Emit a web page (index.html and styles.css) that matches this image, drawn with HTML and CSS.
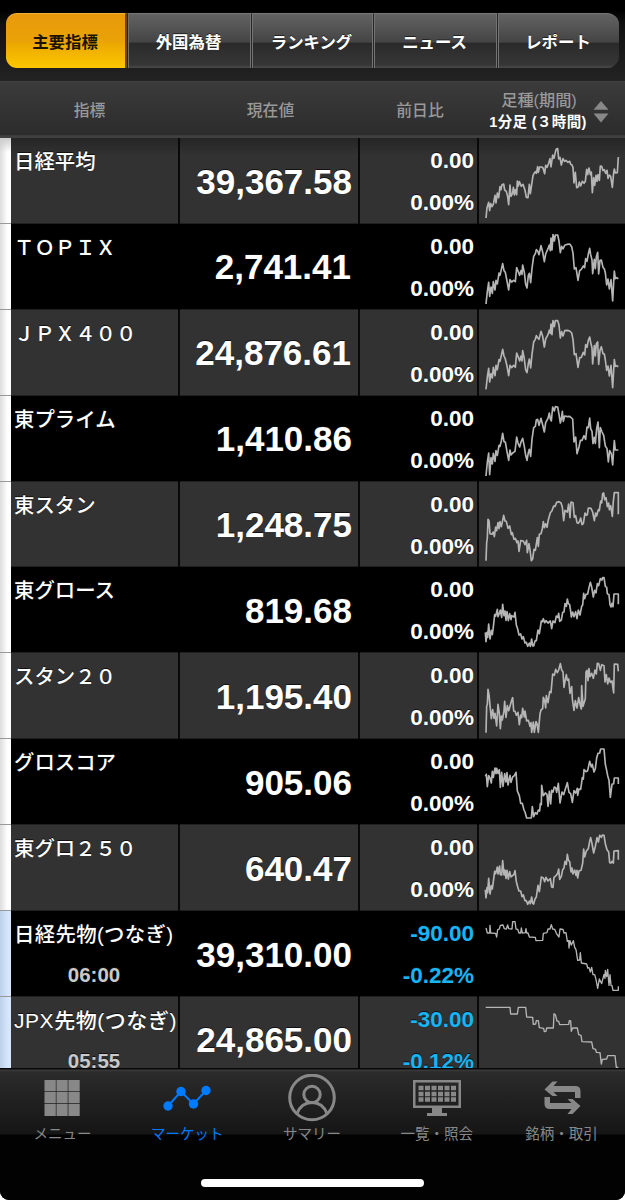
FILE: index.html
```html
<!DOCTYPE html>
<html lang="ja">
<head>
<meta charset="utf-8">
<title>主要指標</title>
<link rel="stylesheet" href="styles.css">
</head>
<body>
<div class="app">
  <nav class="tabs">
    <a class="tab active">主要指標</a>
    <a class="tab">外国為替</a>
    <a class="tab">ランキング</a>
    <a class="tab">ニュース</a>
    <a class="tab">レポート</a>
  </nav>
  <header class="head">
    <div class="h-name">指標</div>
    <div class="h-price">現在値</div>
    <div class="h-change">前日比</div>
    <div class="h-chart">
      <div class="period"><span class="kind">足種(期間)</span><b class="span">1分足 (３時間)</b></div>
      <svg class="sort" viewBox="0 0 16 22"><path d="M8 0 15.5 8.8H.5ZM8 21.5 .5 12.5h15Z"/></svg>
    </div>
  </header>
  <main class="rows">
    <section class="row">
      <i class="mark"></i><div class="name">日経平均</div><div class="price">39,367.58</div>
      <div class="change"><span>0.00</span><span>0.00%</span></div>
      <svg class="spark" viewBox="12 9 438 258"><polyline points="33,249 36,218 41,202 44,227 47,206 51,215 55,208 60,181 63,204 67,174 71,188 75,155 78,164 81,149 86,147 89,165 94,169 98,185 101,209 105,150 108,184 113,174 115,157 118,180 121,164 125,179 127,138 130,153 133,140 139,154 144,148 150,166 154,187 159,188 163,148 166,176 170,149 174,122 178,114 181,110 184,115 188,95 190,112 194,96 200,96 204,99 209,116 212,91 216,97 221,85 225,71 228,96 233,60 237,70 241,52 244,42 248,41 251,72 255,67 259,90 264,71 269,79 273,76 278,82 284,79 287,88 291,90 294,98 297,144 301,112 305,158 310,155 313,141 317,153 322,139 327,145 331,139 335,103 338,119 342,99 346,119 349,111 352,173 356,128 359,151 363,121 366,139 369,119 373,136 376,93 380,94 384,107 388,104 392,115 396,106 399,130 403,120 407,124 412,157 416,113 418,102 421,114 427,113 430,66"/></svg>
    </section>
    <section class="row dark">
      <i class="mark"></i><div class="name">ＴＯＰＩＸ</div><div class="price ones">2,741.41</div>
      <div class="change"><span>0.00</span><span>0.00%</span></div>
      <svg class="spark" viewBox="12 267 438 258"><polyline points="33,507 37,470 41,442 44,484 48,456 52,475 55,440 60,465 63,436 67,447 72,414 75,421 83,386 87,407 91,412 96,438 101,465 105,434 110,441 116,436 121,440 125,398 129,408 134,421 138,407 141,418 143,390 148,412 152,448 156,459 160,421 163,415 167,443 171,400 176,364 181,356 184,344 188,348 192,359 198,332 203,351 208,380 212,357 219,341 223,330 226,347 228,309 231,345 234,299 238,318 241,300 248,300 252,318 256,353 260,334 264,342 269,331 277,328 284,327 290,335 294,355 298,402 303,398 309,436 314,407 319,403 325,393 329,398 332,371 336,379 340,357 344,340 347,359 351,375 353,416 358,373 361,401 364,366 368,352 371,417 375,376 379,375 384,397 388,402 391,413 395,450 399,432 403,462 408,434 413,498 416,442 418,408 421,431 425,428 430,431"/></svg>
    </section>
    <section class="row">
      <i class="mark"></i><div class="name">ＪＰＸ４００</div><div class="price ones">24,876.61</div>
      <div class="change"><span>0.00</span><span>0.00%</span></div>
      <svg class="spark" viewBox="12 15 438 258"><polyline points="33,253 37,216 41,190 44,231 48,206 52,219 55,187 60,212 63,181 67,194 72,164 75,169 83,133 87,153 91,162 96,183 101,212 105,181 110,188 116,181 121,187 125,144 129,154 134,168 138,153 141,168 143,137 148,162 152,195 156,203 160,175 163,162 167,189 171,148 176,111 181,103 184,92 188,98 192,103 198,79 203,94 208,126 212,102 219,89 223,75 226,85 228,57 231,89 234,47 238,65 241,47 248,47 252,60 256,99 260,80 264,93 269,77 277,76 284,78 290,84 294,103 298,149 303,146 309,187 314,158 319,157 325,142 329,150 332,119 336,127 340,106 344,96 347,112 351,129 353,177 358,122 361,153 364,116 368,111 371,178 375,136 379,125 384,146 388,147 391,165 395,196 399,183 403,213 408,181 413,248 416,197 418,164 421,184 425,182 430,185"/></svg>
    </section>
    <section class="row dark">
      <i class="mark"></i><div class="name">東プライム</div><div class="price">1,410.86</div>
      <div class="change"><span>0.00</span><span>0.00%</span></div>
      <svg class="spark" viewBox="12 272 438 258"><polyline points="33,512 37,470 41,443 44,508 48,457 52,476 55,444 60,468 63,436 67,450 72,420 75,423 79,407 83,384 87,409 91,410 96,439 101,465 105,434 108,449 113,443 120,438 125,395 129,413 134,425 138,410 143,399 148,424 152,450 156,465 160,442 163,432 167,453 171,402 176,367 181,363 184,344 188,342 192,360 198,339 203,359 208,380 212,352 219,339 223,323 226,341 229,347 233,305 238,317 241,304 248,305 252,327 256,353 259,341 262,318 265,348 269,332 277,334 284,333 293,341 297,410 302,395 306,445 312,425 316,405 321,405 327,391 332,402 336,365 340,367 344,338 347,370 351,378 354,415 358,396 361,414 365,370 369,350 373,427 376,367 381,380 386,390 391,422 396,430 400,470 404,436 409,445 413,479 416,433 418,406 421,434 430,434"/></svg>
    </section>
    <section class="row">
      <i class="mark"></i><div class="name">東スタン</div><div class="price">1,248.75</div>
      <div class="change"><span>0.00</span><span>0.00%</span></div>
      <svg class="spark" viewBox="12 5 438 258"><polyline points="33,241 35,187 37,173 39,117 42,121 45,160 51,162 55,155 58,169 62,140 65,151 69,127 72,145 75,124 79,139 83,120 86,105 90,122 94,123 99,144 104,137 109,163 112,157 117,177 121,174 126,187 129,182 132,213 137,181 145,182 150,193 155,180 157,217 162,190 165,209 169,241 173,236 177,207 181,210 187,172 190,198 193,162 198,160 202,145 205,124 208,142 212,130 216,141 220,118 226,97 231,91 236,77 240,78 245,66 252,64 258,68 262,80 266,121 270,90 277,95 281,71 285,112 288,65 294,67 298,111 302,106 306,127 310,129 314,123 317,113 321,133 325,130 330,98 334,105 337,103 340,83 348,84 353,95 358,121 362,98 365,107 370,88 373,91 377,62 380,68 383,40 386,38 389,58 393,52 397,79 401,68 403,88 407,76 412,108 415,63 418,37 430,37 430,102"/></svg>
    </section>
    <section class="row dark">
      <i class="mark"></i><div class="name">東グロース</div><div class="price">819.68</div>
      <div class="change"><span>0.00</span><span>0.00%</span></div>
      <svg class="spark" viewBox="12 262 438 258"><polyline points="31,458 33,486 36,458 38,473 41,433 45,478 49,452 52,465 55,442 59,405 62,409 67,389 69,411 74,398 76,391 80,413 83,374 87,408 90,394 93,422 96,396 100,423 104,402 108,420 110,408 117,412 120,398 124,436 128,448 132,466 137,463 141,478 145,471 150,490 154,488 158,500 163,490 166,500 170,478 173,499 176,499 180,484 184,483 189,451 193,462 199,424 202,426 205,417 209,429 213,423 219,430 226,424 230,447 234,424 240,429 244,409 248,413 251,401 254,425 259,421 263,398 267,397 270,372 274,380 277,358 280,372 284,375 287,395 289,412 293,397 297,411 302,396 306,417 310,391 315,406 320,380 323,376 326,341 329,357 333,344 338,343 342,324 346,308 350,322 355,352 359,332 363,340 367,312 371,318 376,297 381,301 383,294 387,294 391,320 395,323 397,342 402,345 405,375 408,382 411,371 414,381 417,343 430,343 430,374"/></svg>
    </section>
    <section class="row">
      <i class="mark"></i><div class="name">スタン２０</div><div class="price">1,195.40</div>
      <div class="change"><span>0.00</span><span>0.00%</span></div>
      <svg class="spark" viewBox="12 10 438 258"><polyline points="33,249 35,169 37,165 39,119 42,135 45,167 49,207 53,180 57,206 60,191 65,229 69,164 73,192 76,237 79,199 82,211 87,184 89,155 93,203 97,168 101,183 106,166 110,152 113,144 116,184 120,185 124,197 129,188 133,225 137,196 140,204 143,176 148,202 150,184 155,214 160,212 165,230 168,219 170,248 175,217 178,248 183,216 186,222 190,248 195,193 198,181 203,177 205,143 209,153 212,175 214,138 219,159 224,126 228,129 233,73 238,77 242,59 247,69 251,61 256,42 260,61 264,67 267,113 271,89 274,75 277,92 281,88 285,131 290,111 292,148 297,182 301,153 306,175 311,144 316,168 319,178 320,108 324,170 331,147 333,67 336,62 339,93 342,57 345,81 350,71 355,86 360,61 364,73 367,41 371,42 376,62 380,45 387,48 390,97 394,75 398,103 402,85 406,98 411,94 416,130 418,43 428,44 430,65"/></svg>
    </section>
    <section class="row dark">
      <i class="mark"></i><div class="name">グロスコア</div><div class="price">905.06</div>
      <div class="change"><span>0.00</span><span>0.00%</span></div>
      <svg class="spark" viewBox="12 268 438 258"><polyline points="31,380 34,374 37,411 41,378 45,385 49,400 52,365 55,383 60,355 63,372 65,356 69,371 73,360 76,413 80,368 84,410 89,372 93,397 96,369 99,406 105,377 108,398 113,382 118,378 123,368 127,424 133,438 137,461 142,461 147,481 150,487 155,505 169,505 172,471 176,501 181,489 186,493 190,481 194,484 196,462 199,465 200,407 205,438 211,430 216,434 219,470 223,425 227,463 230,422 234,427 238,412 242,414 245,428 250,401 255,460 261,427 266,435 271,418 277,399 282,428 287,432 292,458 297,423 302,430 307,416 308,437 312,418 317,419 322,384 325,388 327,360 333,366 338,363 344,335 349,352 352,344 357,367 361,357 365,325 369,311 374,310 377,298 387,298 391,344 395,362 398,378 402,392 406,443 411,404 416,402 418,385 430,385 430,403"/></svg>
    </section>
    <section class="row">
      <i class="mark"></i><div class="name">東グロ２５０</div><div class="price">640.47</div>
      <div class="change"><span>0.00</span><span>0.00%</span></div>
      <svg class="spark" viewBox="12 10 438 258"><polyline points="31,204 33,229 36,198 38,213 41,170 45,217 49,192 52,202 55,180 59,149 62,156 67,136 69,157 74,133 76,159 80,160 83,117 87,160 90,145 93,170 96,146 100,172 104,150 108,166 117,158 120,147 124,180 128,195 132,208 137,208 141,225 145,220 150,237 154,237 158,248 163,238 166,246 170,226 173,245 176,247 180,232 184,226 189,191 193,210 199,166 205,169 209,180 213,167 219,178 226,171 230,196 234,197 237,167 244,161 248,155 251,142 254,173 259,164 263,144 267,139 270,119 274,128 277,98 280,115 284,120 288,151 291,139 294,157 299,145 303,161 306,146 308,169 312,148 318,146 323,125 326,82 329,106 334,88 340,81 344,59 347,48 351,66 356,94 361,74 366,48 370,61 374,41 379,47 382,40 387,41 391,66 396,84 401,91 404,123 408,124 411,119 415,124 417,88 430,87 430,114"/></svg>
    </section>
    <section class="row dark future">
      <i class="mark"></i><div class="name">日経先物(つなぎ)<span class="time">06:00</span></div><div class="price">39,310.00</div>
      <div class="change down"><span>-90.00</span><span>-0.22%</span></div>
      <svg class="spark thin" viewBox="12 9 438 258"><polyline points="33,60 37,75 44,75 45,52 47,75 62,76 65,87 68,65 73,63 76,52 84,51 88,62 94,63 98,51 101,62 111,63 113,41 120,41 123,63 128,64 132,75 137,75 139,60 142,75 151,74 153,62 155,75 159,75 163,87 181,88 183,98 203,97 205,76 216,74 219,63 225,63 229,50 233,63 239,64 244,76 252,87 255,63 264,64 267,75 273,74 277,100 281,98 282,120 285,98 289,111 295,98 299,118 303,125 308,157 314,156 316,134 319,165 335,168 338,180 342,179 346,192 350,178 354,200 359,200 363,214 368,241 373,213 380,227 387,199 390,211 391,187 395,206 398,184 402,232 405,200 408,232 411,233 414,247 430,247 430,235"/></svg>
    </section>
    <section class="row future">
      <i class="mark"></i><div class="name tight">JPX先物(つなぎ)<span class="time">05:55</span></div><div class="price">24,865.00</div>
      <div class="change down"><span>-30.00</span><span>-0.12%</span></div>
      <svg class="spark thin" viewBox="12 267 438 258"><polyline points="32,298 105,298 107,318 127,318 130,298 152,298 155,327 173,328 175,349 182,348 184,338 190,338 193,359 206,361 208,371 213,370 215,360 235,360 237,317 241,320 246,339 251,340 254,350 281,349 283,338 287,339 289,370 293,360 307,360 311,380 318,382 321,401 350,402 354,422 362,424 364,433 375,434 379,468 382,454 395,453 398,443 420,443 424,478 430,478"/></svg>
    </section>
  </main>
  <footer class="nav">
    <div class="items">
      <a class="item"><svg viewBox="0 0 48 48"><path d="M6.500 6h11.300v11.300H6.500zM18.500 6h11.200v11.300H18.500zM30.400 6h11.300v11.300H30.400zM6.500 18h11.300v11.300H6.500zM18.500 18h11.200v11.300H18.500zM30.400 18h11.300v11.300H30.400zM6.500 30h11.300v12H6.500zM18.500 30h11.200v12H18.500zM30.400 30h11.300v12H30.400z"/></svg><span>メニュー</span></a>
      <a class="item on"><svg viewBox="0 0 48 48"><path class="line" d="m5 32 13-14.500L30.500 30 43 16.500"/><circle cx="5" cy="32" r="4.700"/><circle cx="18" cy="17.500" r="4.700"/><circle cx="30.500" cy="30" r="4.700"/><circle cx="43" cy="16.500" r="4.700"/></svg><span>マーケット</span></a>
      <a class="item"><svg viewBox="0 0 48 48"><g class="ring"><circle cx="24" cy="23.500" r="22.300"/><circle cx="24" cy="20.500" r="8.200"/><path d="M9 39.500C12 32 17 28.500 24 28.500s12 3.500 15 11"/></g></svg><span>サマリー</span></a>
      <a class="item"><svg viewBox="0 0 48 48"><path fill-rule="evenodd" d="M0 6h48v28H0zM2.500 8.500v23h43v-23z"/><path d="M19 33h10v6h5v3H14v-3h5z"/><path class="keys" d="M5.500 14h37.500M5.500 20h37.500M5.500 25.500h37.500"/></svg><span>一覧・照会</span></a>
      <a class="item"><svg viewBox="0 0 48 48"><path d="M6.500 15.500 14.500 7.500h5l-4 4.500h21.500q5.500 0 5.500 5V24h-5.500v-6H15.500l4 4h-5zM6.500 23H12v6h21.500l-4-4h5l8 7-8 8h-5l4-5H12q-5.500 0-5.500-5z"/></svg><span>銘柄・取引</span></a>
    </div>
    <div class="home"></div>
  </footer>
</div>
</body>
</html>
```
FILE: styles.css
```css
* { box-sizing: border-box; }
body { margin: 0; background: #fff; font-family: "Liberation Sans", "Noto Sans CJK JP", sans-serif; color: #fff; }
.app { width: 625px; height: 1200px; display: flex; flex-direction: column; background: #000; border-radius: 0 0 9px 9px; overflow: hidden; }

.tabs { height: 81px; flex: none; padding: 13px 6px; display: grid; grid-template-columns: 121px 124px 122px 124px 122px; background: linear-gradient(#000 0 10px, #111 30%, #232323); }
.tab { display: flex; align-items: center; justify-content: center; height: 55px; padding-right: 1px; font-size: 16.400px; font-weight: 700; text-shadow: 0 -1px #222; background: linear-gradient(#636363, #444 52%, #2a2a2a 54%, #363636 94%, #4a4a4a); border-top: 1px solid #777; border-left: 1px solid #262626; border-right: 1px solid #737373; box-shadow: inset 1px 0 #737373; }
.tab:first-child { border-radius: 11px 0 0 11px; }
.tab:last-child { border-radius: 0 12px 12px 0; border-right: 0; }
.tab.active { color: #1c1200; text-shadow: none; border: 0; border-top: 1px solid #efb23b; border-right: 2px solid #6b4700; background: linear-gradient(#e8990c, #eaa307 52%, #eca800 55%, #fcc800); box-shadow: none; }

.head { height: 57px; flex: none; display: grid; grid-template-columns: 179px 180px 120px 146px; background: linear-gradient(#3b3b3b, #2c2c2c 94%, #404040 96%); color: #999; font-size: 15.800px; font-weight: 500; text-align: center; border-top: 1px solid #424242; }
.h-name, .h-price, .h-change { line-height: 57px; }
.h-price { padding-left: 3px; }
.h-change { padding-left: 2px; }
.h-chart { display: flex; align-items: center; gap: 4px; padding: 2px 0 0 10px; }
.period { display: flex; flex-direction: column; width: 100px; white-space: nowrap; align-items: center; }
.kind { line-height: 21px; font-size: 16.200px; }
.span { font-size: 14.500px; line-height: 22px; letter-spacing: .35px; padding-right: 2px; color: #fff; }
.sort { width: 16px; height: 22px; fill: #888; }

.rows { height: 930px; flex: none; overflow: hidden; }
.row { height: 85.900px; display: grid; grid-template-columns: 11px 169px 180px 119px 146px; background: #323232; border-bottom: 1px solid #202020; }
.row.dark { background: #000; }
.mark { background: linear-gradient(90deg, #ddd, #fff 70%); border-bottom: 1px solid #999; }
.row:first-child { background: linear-gradient(#252525, #323232 18px); }
.row:first-child .mark { background: linear-gradient(#ccc, #fff0 14px), linear-gradient(90deg, #ddd, #fff 70%); }
.future .mark { background: linear-gradient(90deg, #bdd0ea, #d6e7fd 75%); }
.name, .price, .change { border-right: 2px solid #090909; white-space: nowrap; }
.dark .name, .dark .price, .dark .change { border-color: #000; }
.name { padding: 8px 0 0 3px; font-size: 20.400px; line-height: 32px; font-weight: 500; text-shadow: 0 -1px #111; }
.future .name { letter-spacing: .35px; }
.future .tight { font-size: 21px; letter-spacing: .55px; }
.time { display: block; width: 160px; text-align: center; font-size: 20.500px; line-height: 26px; margin-top: 11px; letter-spacing: 0; color: #c9c9c9; font-weight: 700; }
.price { display: flex; justify-content: flex-end; align-items: center; padding: 1px 6px 0 0; font-size: 35px; font-weight: 700; text-shadow: 0 -1px #111; }
.ones { padding-right: 7px; }
.change { display: flex; flex-direction: column; justify-content: space-between; align-items: flex-end; padding: 9px 3px 8px 0; font-size: 22.500px; line-height: 27px; font-weight: 700; text-shadow: 0 -1px #111; }
.down { color: #16b5f5; }
.spark { width: 146px; height: 86px; fill: none; stroke: #b5b5b5; stroke-width: 5; stroke-linejoin: round; }
.spark.thin { stroke-width: 4; }

.nav { height: 132px; background: linear-gradient(#080808 0 1px, #3c3c3c 2px, #2b2b2b 4px, #151515 66px, #020202 67px); display: flex; flex-direction: column; align-items: center; justify-content: space-between; padding: 6px 0 13px; }
.items { display: grid; grid-template-columns: repeat(5, 1fr); width: 625px; padding-right: 1px; }
.item { display: flex; flex-direction: column; align-items: center; font-size: 14.500px; color: #888; fill: #888; }
.item svg { width: 48px; height: 48px; }
.item span { line-height: 22px; margin-top: 1px; }
.on { color: #007aff; fill: #007aff; }
.line { fill: none; stroke: #007aff; stroke-width: 2; }
.ring { fill: none; stroke: #888; stroke-width: 3; }
.keys { stroke: #888; stroke-width: 4.300; stroke-dasharray: 5 1.500; }
.home { width: 223px; height: 8px; border-radius: 4px; background: #fff; }
```
